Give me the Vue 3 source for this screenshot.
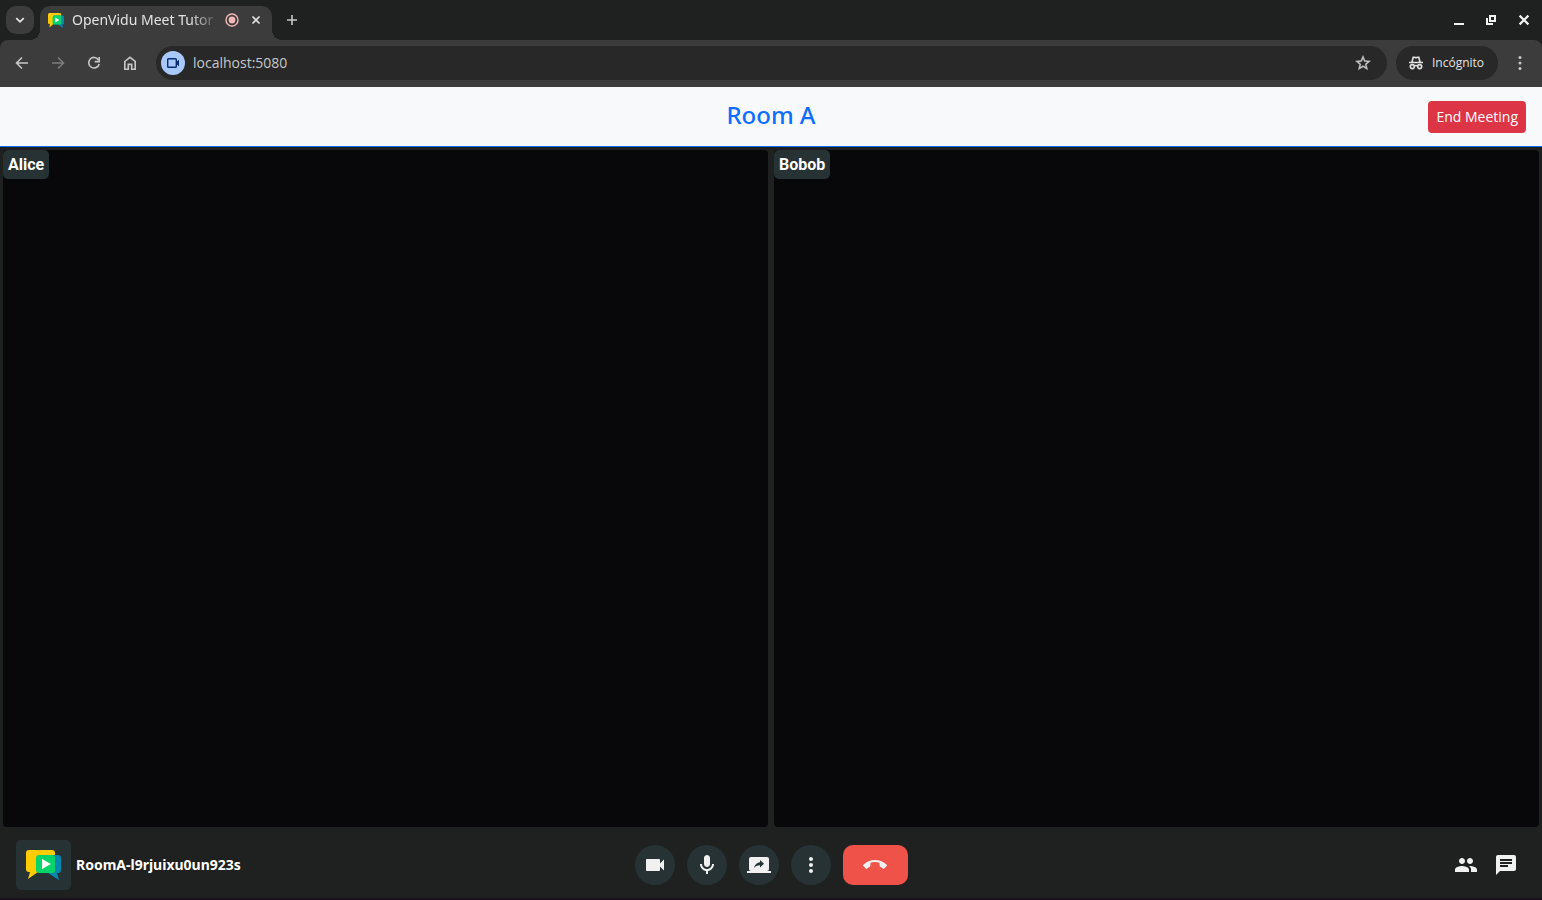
<script setup>
import { ref } from 'vue'

const participants = ['Alice', 'Bobob']
const address = ref('localhost:5080')
</script>

<template>
  <div class="window">
    <div class="tabstrip">
      <button class="tab-search" aria-label="Search tabs">
        <svg width="16" height="16" viewBox="0 0 16 16"><path d="M4.3 6.2 8 9.8l3.7-3.6" fill="none" stroke="currentColor" stroke-width="1.8" /></svg>
      </button>
      <div class="tab">
        <svg class="favicon" width="16" height="15" viewBox="0 0 35 30" preserveAspectRatio="none">
          <path fill="#ffcc02" d="M3 0h23a3 3 0 0 1 3 3v16a3 3 0 0 1-3 3H12L3 29l1-7H3a3 3 0 0 1-3-3V3a3 3 0 0 1 3-3z" />
          <path fill="#0489ae" d="M13 5h19a3 3 0 0 1 3 3v12a3 3 0 0 1-3 3h-1l2 7-11-7h-9z" />
          <rect x="10" y="5" width="19" height="18" rx="3" fill="#07d468" />
          <path fill="#fff" d="m16 9 9 5-9 5z" />
        </svg>
        <span class="tab-title">OpenVidu Meet Tutor</span>
        <svg class="recording" width="14" height="14" viewBox="0 0 14 14"><circle cx="7" cy="7" r="6" fill="none" stroke="currentColor" stroke-width="1.4" /><circle cx="7" cy="7" r="3.4" fill="currentColor" /></svg>
        <button class="tab-close" aria-label="Close tab">
          <svg width="16" height="16" viewBox="0 0 16 16"><path d="m4.5 4.5 7 7m0-7-7 7" stroke="currentColor" stroke-width="1.7" /></svg>
        </button>
      </div>
      <button class="new-tab" aria-label="New tab">
        <svg width="16" height="16" viewBox="0 0 16 16"><path d="M8 3v10M3 8h10" stroke="currentColor" stroke-width="1.6" /></svg>
      </button>
      <div class="window-controls">
        <button aria-label="Minimize"><svg width="16" height="16" viewBox="0 0 16 16"><path d="M2 12h10" stroke="currentColor" stroke-width="2" /></svg></button>
        <button aria-label="Restore"><svg width="16" height="16" viewBox="0 0 16 16"><path d="M6 4h5v5H6zM3 6v6h6" fill="none" stroke="currentColor" stroke-width="2" /></svg></button>
        <button aria-label="Close"><svg width="16" height="16" viewBox="0 0 16 16"><path d="m3.6 3.6 8.8 8.8m0-8.8-8.8 8.8" stroke="currentColor" stroke-width="2.2" /></svg></button>
      </div>
    </div>

    <div class="toolbar">
      <button class="nav" aria-label="Back"><svg width="16" height="16" viewBox="0 0 16 16"><path d="M14 8H3M8 2.5 2.5 8 8 13.5" fill="none" stroke="currentColor" stroke-width="1.6" /></svg></button>
      <button class="nav" aria-label="Forward" disabled><svg width="16" height="16" viewBox="0 0 16 16"><path d="M2 8h11M8 2.5 13.5 8 8 13.5" fill="none" stroke="currentColor" stroke-width="1.6" /></svg></button>
      <button class="nav" aria-label="Reload"><svg width="16" height="16" viewBox="0 0 16 16"><path d="M12.6 5A5.3 5.3 0 1 0 13.2 9" fill="none" stroke="currentColor" stroke-width="1.6" /><path d="M13.2 2v4.6H8.7" fill="none" stroke="currentColor" stroke-width="1.6" /></svg></button>
      <button class="nav" aria-label="Home"><svg width="16" height="16" viewBox="0 0 16 16"><path d="M2.8 6.5 8 2.3l5.2 4.2v7.7H9.7V9.4H6.3v4.8H2.8z" fill="none" stroke="currentColor" stroke-width="1.6" /></svg></button>
      <div class="address-bar">
        <button class="site-media" aria-label="Camera in use">
          <svg width="14" height="14" viewBox="0 0 14 14"><rect x="1.7" y="2.7" width="8.6" height="8.6" rx="0.8" fill="none" stroke="currentColor" stroke-width="1.4" /><path d="M10 6.2 13 3.7v6.6L10 7.8z" fill="currentColor" /></svg>
        </button>
        <input v-model="address" class="address" type="text" aria-label="Address" />
        <button class="star" aria-label="Bookmark">
          <svg width="18" height="18" viewBox="0 0 24 24"><path fill="currentColor" stroke="currentColor" stroke-width="0.5" d="m22 9.24-7.19-.62L12 2 9.19 8.63 2 9.24l5.46 4.73L5.82 21 12 17.27 18.18 21l-1.63-7.03zM12 15.4l-3.76 2.27 1-4.28-3.32-2.88 4.38-.38L12 6.1l1.71 4.04 4.38.38-3.32 2.88 1 4.28z" /></svg>
        </button>
      </div>
      <button class="incognito">
        <svg width="16" height="16" viewBox="0 0 16 16"><path d="M1 7.5h14M4 7l1.2-4.7h1.3L8 2.8l1.5-.5h1.3L12 7M6 11q2-.9 4 0" fill="none" stroke="currentColor" stroke-width="1.6" /><circle cx="4.3" cy="11.6" r="2" fill="none" stroke="currentColor" stroke-width="1.6" /><circle cx="11.7" cy="11.6" r="2" fill="none" stroke="currentColor" stroke-width="1.6" /></svg>
        <span>Incógnito</span>
      </button>
      <button class="menu" aria-label="Menu"><svg width="16" height="16" viewBox="0 0 16 16" fill="currentColor"><circle cx="8" cy="2.5" r="1.5" /><circle cx="8" cy="8" r="1.5" /><circle cx="8" cy="13.5" r="1.5" /></svg></button>
    </div>

    <header class="room-header">
      <h1>Room A</h1>
      <button class="end-meeting">End Meeting</button>
    </header>

    <main class="meeting">
      <div class="videos">
        <section v-for="name in participants" :key="name" class="video">
          <span class="name">{{ name }}</span>
        </section>
      </div>
      <footer class="controls">
        <div class="room-info">
          <span class="logo">
            <svg width="35" height="30" viewBox="0 0 35 30">
              <path fill="#ffcc02" d="M3 0h23a3 3 0 0 1 3 3v16a3 3 0 0 1-3 3H12L2 29l2-7H3a3 3 0 0 1-3-3V3a3 3 0 0 1 3-3z" />
              <path fill="#0489ae" d="M13 5h19a3 3 0 0 1 3 3v12a3 3 0 0 1-3 3h-1l2 7-11-7h-9z" />
              <rect x="10" y="5" width="19" height="18" rx="3" fill="#07d468" />
              <path fill="#fff" d="m16 9 9 5-9 5z" />
            </svg>
          </span>
          <span class="room-id">RoomA-l9rjuixu0un923s</span>
        </div>
        <div class="media-buttons">
          <button class="round" aria-label="Camera"><svg viewBox="0 0 24 24"><path d="M17 10.5V7c0-.55-.45-1-1-1H4c-.55 0-1 .45-1 1v10c0 .55.45 1 1 1h12c.55 0 1-.45 1-1v-3.5l4 4v-11z" /></svg></button>
          <button class="round" aria-label="Microphone"><svg viewBox="0 0 24 24"><path d="M12 14c1.66 0 3-1.34 3-3V5c0-1.66-1.34-3-3-3S9 3.34 9 5v6c0 1.66 1.34 3 3 3zm5-3c0 2.76-2.24 5-5 5s-5-2.24-5-5H5c0 3.53 2.61 6.43 6 6.92V21h2v-3.08c3.39-.49 6-3.39 6-6.92z" /></svg></button>
          <button class="round" aria-label="Share screen"><svg viewBox="0 0 24 24"><path d="M20 18c1.1 0 1.99-.9 1.99-2L22 6c0-1.11-.9-2-2-2H4c-1.11 0-2 .89-2 2v10c0 1.1.89 2 2 2H0v2h24v-2zm-7-3.53v-2.19c-2.78 0-4.61.85-6 2.72.56-2.67 2.11-5.33 6-5.87V7l4 3.73z" /></svg></button>
          <button class="round" aria-label="More options"><svg viewBox="0 0 24 24"><path d="M12 8c1.1 0 2-.9 2-2s-.9-2-2-2-2 .9-2 2 .9 2 2 2zm0 2c-1.1 0-2 .9-2 2s.9 2 2 2 2-.9 2-2-.9-2-2-2zm0 6c-1.1 0-2 .9-2 2s.9 2 2 2 2-.9 2-2-.9-2-2-2z" /></svg></button>
          <button class="leave" aria-label="Leave"><svg viewBox="0 0 24 24"><path d="M12 9c-1.6 0-3.15.25-4.6.72v3.1c0 .39-.23.74-.56.9-.98.49-1.87 1.12-2.66 1.85-.18.18-.43.28-.7.28-.28 0-.53-.11-.71-.29L.29 13.08c-.18-.17-.29-.42-.29-.7 0-.28.11-.53.29-.71C3.34 8.78 7.46 7 12 7s8.66 1.78 11.71 4.67c.18.18.29.43.29.71 0 .28-.11.53-.29.71l-2.48 2.48c-.18.18-.43.29-.71.29-.27 0-.52-.11-.7-.28-.79-.74-1.69-1.36-2.67-1.85-.33-.16-.56-.5-.56-.9v-3.1C15.15 9.25 13.6 9 12 9z" /></svg></button>
        </div>
        <div class="panel-buttons">
          <button aria-label="Participants"><svg viewBox="0 0 24 24"><path d="M16 11c1.66 0 2.99-1.34 2.99-3S17.66 5 16 5s-3 1.34-3 3 1.34 3 3 3zm-8 0c1.66 0 2.99-1.34 2.99-3S9.66 5 8 5 5 6.34 5 8s1.34 3 3 3zm0 2c-2.33 0-7 1.17-7 3.5V19h14v-2.5c0-2.33-4.67-3.5-7-3.5zm8 0c-.29 0-.62.02-.97.05 1.16.84 1.97 1.97 1.97 3.45V19h6v-2.5c0-2.33-4.67-3.5-7-3.5z" /></svg></button>
          <button aria-label="Chat"><svg viewBox="0 0 24 24"><path d="M20 2H4c-1.1 0-1.99.9-1.99 2L2 22l4-4h14c1.1 0 2-.9 2-2V4c0-1.1-.9-2-2-2zM6 9h12v2H6zm8 5H6v-2h8zm4-6H6V6h12z" /></svg></button>
        </div>
      </footer>
    </main>
  </div>
</template>

<style>
body {
  margin: 0;
}
</style>

<style scoped>
.window {
  display: flex;
  flex-direction: column;
  box-sizing: border-box;
  height: 100vh;
  overflow: hidden;
  border-bottom: 2px solid #1a121a;
  background: #1f2020;
  font-family: "Noto Sans", "Open Sans", sans-serif;
}
.window * {
  box-sizing: border-box;
}
button {
  display: flex;
  align-items: center;
  justify-content: center;
  margin: 0;
  padding: 0;
  border: 0;
  background: none;
  color: inherit;
  font-family: inherit;
  flex: none;
}
svg {
  display: block;
  flex: none;
}
.tabstrip {
  display: flex;
  align-items: center;
  flex: none;
  height: 40px;
  padding: 0 10px 0 6px;
  color: #e3e3e3;
}
.tab-search {
  width: 28px;
  height: 28px;
  border-radius: 10px;
  background: #3c3c3c;
}
.tab {
  position: relative;
  display: flex;
  align-items: center;
  align-self: flex-end;
  width: 232px;
  height: 34px;
  margin-left: 6px;
  padding: 0 8px 6px;
  border-radius: 10px 10px 0 0;
  background: #3c3c3c;
}
.tab::before,
.tab::after {
  content: "";
  position: absolute;
  bottom: 0;
  width: 10px;
  height: 10px;
}
.tab::before {
  right: 100%;
  background: radial-gradient(circle at 0 0, transparent 10px, #3c3c3c 10px);
}
.tab::after {
  left: 100%;
  background: radial-gradient(circle at 100% 0, transparent 10px, #3c3c3c 10px);
}
.tab-title {
  flex: 1;
  min-width: 0;
  margin: 0 5px 0 8px;
  white-space: nowrap;
  font-size: 14px;
  line-height: 20px;
  mask-image: linear-gradient(90deg, #000 118px, transparent 100%);
}
.recording {
  color: #f2b8b5;
}
.tab-close {
  width: 16px;
  margin-left: 9px;
}
.new-tab {
  width: 16px;
  margin-left: 12px;
  color: #c7c7c7;
}
.window-controls {
  display: flex;
  gap: 16px;
  margin-left: auto;
  color: #f1f1f1;
}
.toolbar {
  display: flex;
  align-items: center;
  flex: none;
  height: 47px;
  padding: 0 14px 1px;
  border-radius: 8px 8px 0 0;
  background: #3c3c3c;
  color: #c7c7c7;
}
.nav {
  width: 16px;
  margin-right: 20px;
}
.nav:disabled {
  color: #7c7c7c;
}
.address-bar {
  display: flex;
  align-items: center;
  flex: 1;
  height: 34px;
  margin-left: -2px;
  padding: 0 15px 0 5px;
  border-radius: 17px;
  background: #282828;
}
.site-media {
  width: 24px;
  height: 24px;
  border-radius: 50%;
  background: #a8c7fa;
  color: #062e6f;
}
.address {
  flex: 1;
  min-width: 0;
  margin: 0 8px;
  padding: 0;
  border: 0;
  outline: 0;
  background: none;
  color: #c7c7c7;
  font-family: "Open Sans", "Noto Sans", sans-serif;
  font-size: 14px;
  line-height: 20px;
}
.incognito {
  justify-content: flex-start;
  gap: 8px;
  width: 102px;
  height: 34px;
  margin: 0 14px 0 9px;
  padding: 0 12px;
  border-radius: 17px;
  background: #282828;
  color: #e3e3e3;
  font-family: "Open Sans", "Noto Sans", sans-serif;
  font-size: 12px;
  line-height: 20px;
}
.room-header {
  display: grid;
  grid-template-columns: 1fr auto 1fr;
  align-items: center;
  height: 60px;
  flex: none;
  padding: 0 16px;
  border-bottom: 1px solid #0d6efd;
  background: #f8f9fa;
}
.room-header h1 {
  grid-column: 2;
  margin: 0;
  padding-bottom: 3px;
  color: #0d6efd;
  font-size: 24px;
  font-weight: 500;
  line-height: 28px;
}
.end-meeting {
  justify-self: end;
  height: 32px;
  padding: 0 8px;
  border-radius: 4px;
  background: #dc3545;
  color: #fff;
  font-family: "Open Sans", "Noto Sans", sans-serif;
  font-size: 14px;
  line-height: 20px;
}
.meeting {
  display: flex;
  flex: 1;
  flex-direction: column;
  min-height: 0;
}
.videos {
  display: grid;
  grid-template-columns: 1fr 1fr;
  gap: 6px;
  flex: 1;
  padding: 3px 3px 0;
}
.video {
  border-radius: 4px;
  background: #08080a;
}
.name {
  display: block;
  width: fit-content;
  height: 29px;
  padding: 0 5px;
  border-radius: 5px;
  background: #273235;
  color: #fff;
  font-family: Roboto, sans-serif;
  font-size: 16px;
  font-weight: 700;
  line-height: 29px;
}
.controls {
  display: grid;
  grid-template-columns: 1fr auto 1fr;
  align-items: center;
  height: 71px;
  padding: 5px 16px 0;
}
.room-info {
  display: flex;
  align-items: center;
  gap: 5px;
}
.logo {
  display: flex;
  align-items: center;
  justify-content: center;
  width: 55px;
  height: 50px;
  border-radius: 5px;
  background: #273235;
}
.room-id {
  color: #fff;
  font-size: 14px;
  font-weight: 700;
  line-height: 20px;
}
.media-buttons {
  display: flex;
  gap: 12px;
}
.media-buttons svg,
.panel-buttons svg {
  width: 24px;
  height: 24px;
  fill: #f1f1f1;
}
.round {
  width: 40px;
  height: 40px;
  border-radius: 50%;
  background: #273235;
}
.leave {
  width: 65px;
  height: 40px;
  border-radius: 10px;
  background: #ee5248;
}
.panel-buttons {
  display: flex;
  justify-content: flex-end;
}
.panel-buttons button {
  width: 40px;
  height: 40px;
}
</style>
